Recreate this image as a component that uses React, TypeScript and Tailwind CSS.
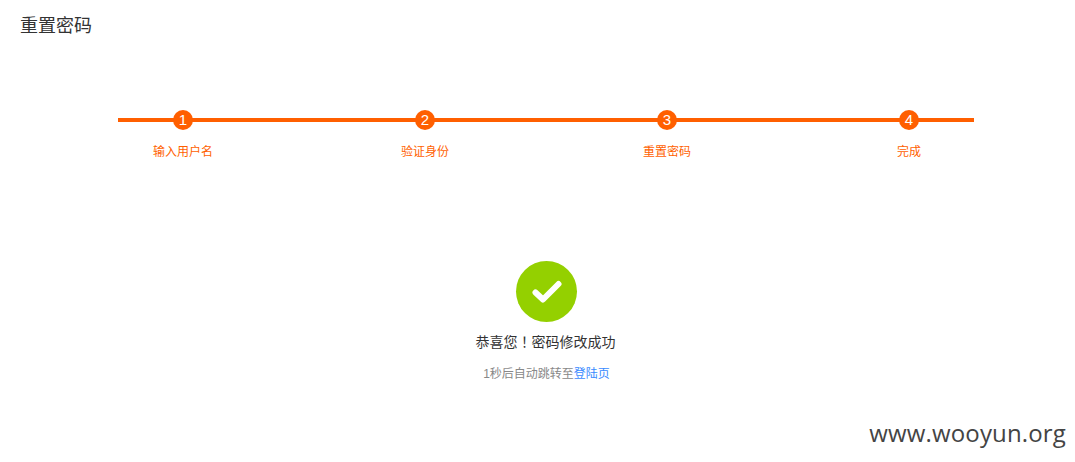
import React from 'react';

const steps = ['输入用户名', '验证身份', '重置密码', '完成'];

const font = "font-['Liberation_Sans','Noto_Sans_CJK_SC',sans-serif]";

const App: React.FC = () => {
  return (
    <div className={`relative h-[462px] w-[1075px] overflow-hidden bg-white ${font}`}>
      <h1 className="pl-5 pt-[16px] text-[18px] font-normal leading-[20px] text-[#333]">重置密码</h1>

      <div className="relative ml-[62px] mt-[74px] flex w-[968px]">
        <div className="absolute left-[56px] top-[8px] h-1 w-[856px] bg-[#ff5f00]" />
        {steps.map((label, i) => (
          <div key={label} className="relative flex w-[242px] flex-col items-center">
            <div className="flex h-5 w-5 items-center justify-center rounded-full bg-[#ff5f00] text-[15px] leading-5 text-white">
              {i + 1}
            </div>
            <div className="mt-[13px] text-[12px] leading-[18px] text-[#ff5f00]">{label}</div>
          </div>
        ))}
      </div>

      <div className="mt-[100px] flex flex-col items-center pl-[18px]">
        <div className="flex h-[61px] w-[61px] items-center justify-center rounded-full bg-[#94d000]">
          <svg width="30" height="24" viewBox="0 0 30 24" fill="none">
            <path d="M3.5 12.5 L11 19.5 L26.5 4" stroke="#fff" strokeWidth="6" strokeLinecap="round" strokeLinejoin="round" />
          </svg>
        </div>
        <p className="mt-[9px] pr-[2px] text-[14px] leading-5 text-[#333]">
          恭喜您<span className="font-['Noto_Sans_CJK_TC',sans-serif]">！</span>密码修改成功
        </p>
        <p className="mt-[13px] text-[12px] leading-[18px] text-[#888]">
          1秒后自动跳转至<a className="text-[#3b8cff]">登陆页</a>
        </p>
      </div>

      <div className="absolute bottom-[13px] right-[9px] font-['Open_Sans',sans-serif] text-[24px] leading-[32px] tracking-[0.15px] text-[#444]">
        www.wooyun.org
      </div>
    </div>
  );
};

export default App;
